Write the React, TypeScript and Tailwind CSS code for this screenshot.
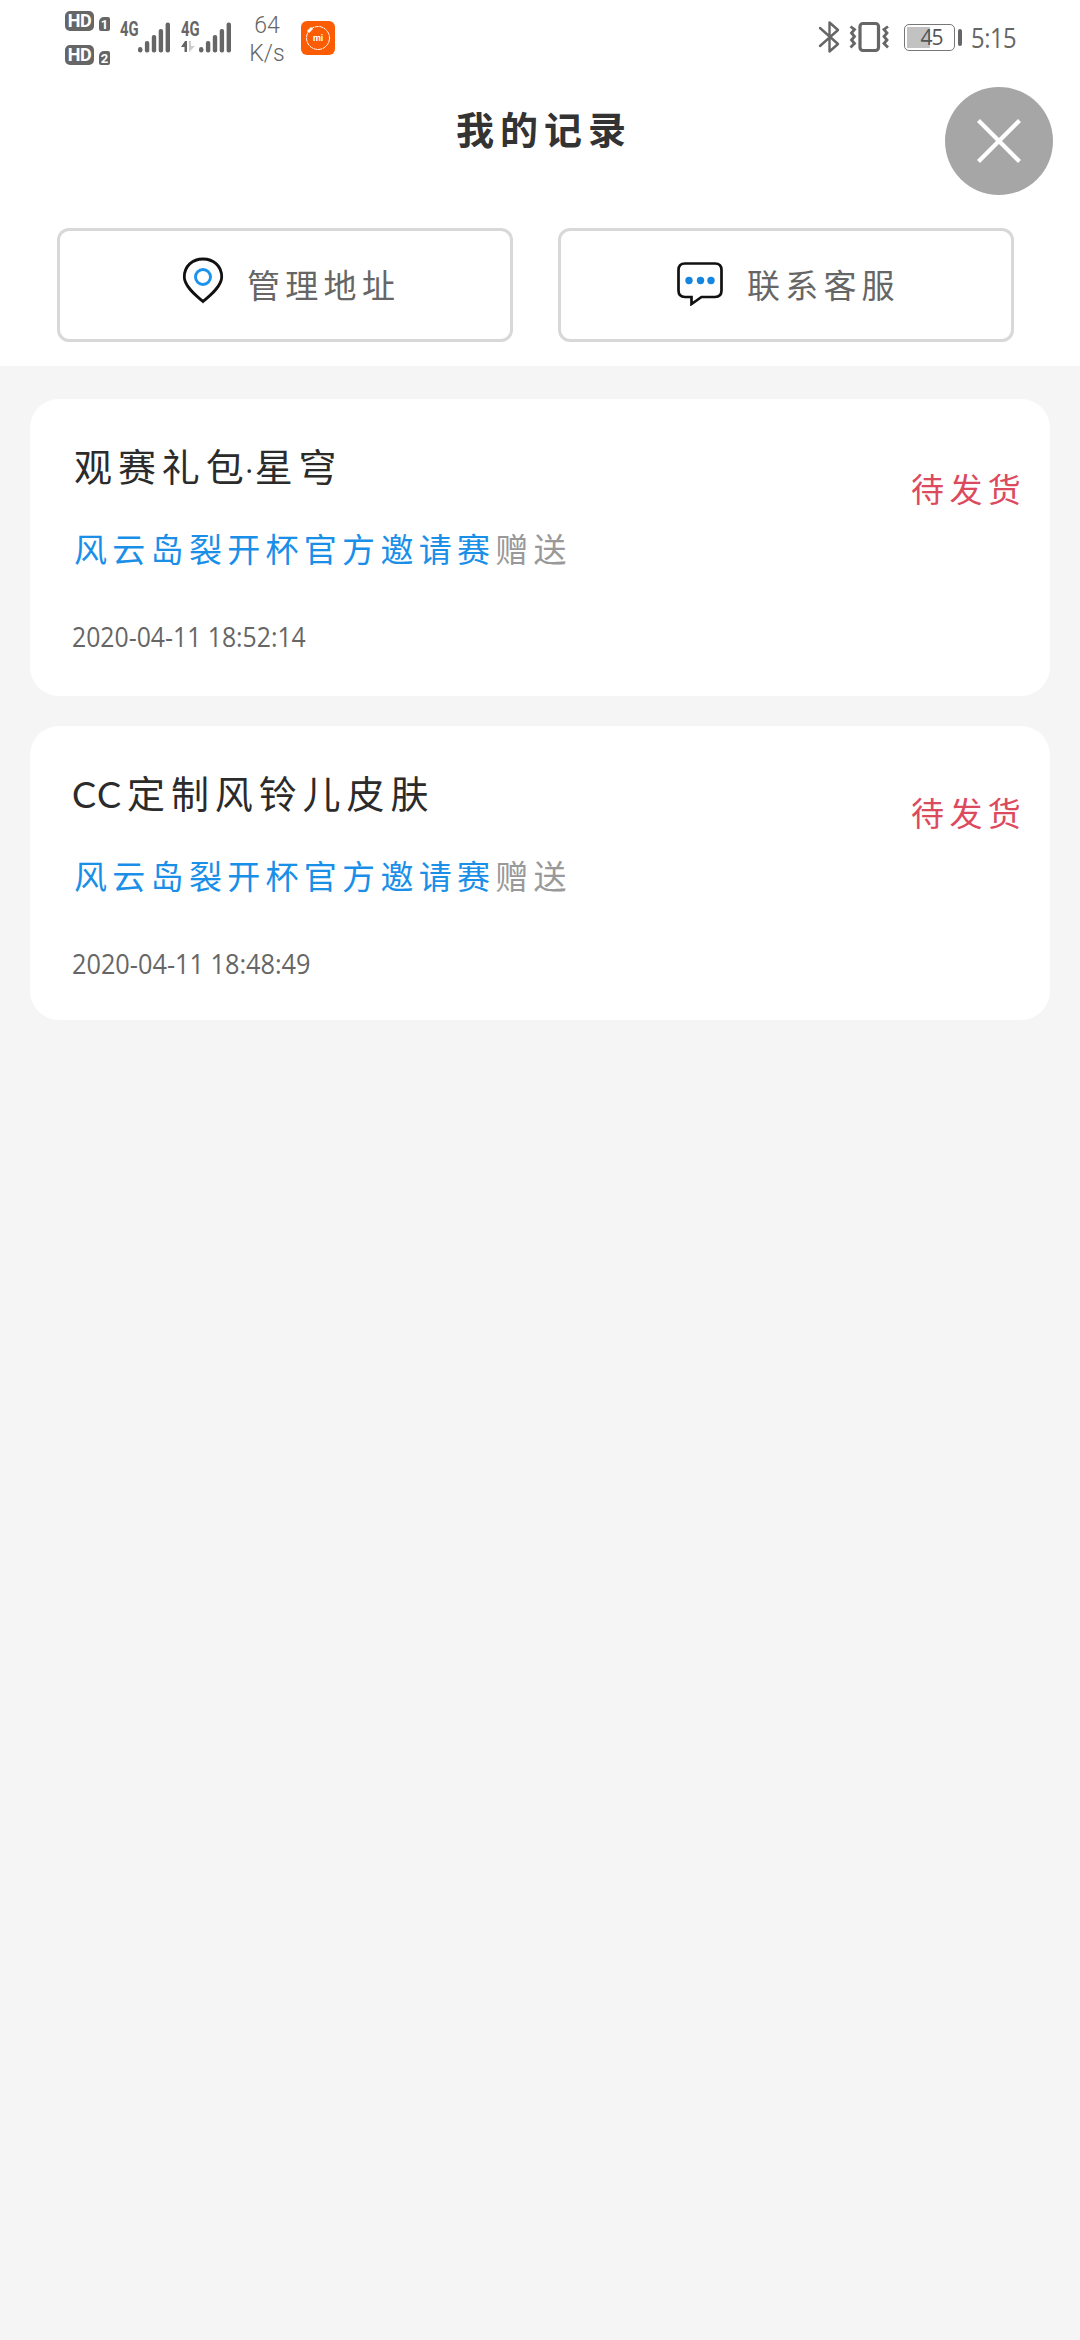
import clsx from 'clsx';

interface RecordItem {
  id: number;
  title: React.ReactNode;
  source: string;
  time: string;
  timeClass: string;
  status: string;
  className: string;
  statusClass: string;
}

const records: RecordItem[] = [
  {
    id: 1,
    title: (
      <>
        观赛礼<span className="tracking-normal">包</span>
        <span className="inline-block w-[11px] text-center font-['Open_Sans'] text-[30px] leading-none tracking-normal">·</span>
        星穹
      </>
    ),
    source: '风云岛裂开杯官方邀请赛',
    time: '2020-04-11 18:52:14',
    timeClass: 'scale-x-[0.885]',
    status: '待发货',
    className: 'h-[297px]',
    statusClass: 'pt-[72px]',
  },
  {
    id: 2,
    title: (
      <>
        <span className="-ml-[2px] inline-block w-[55px] font-['Lato'] text-[36px] leading-none tracking-[1.5px]">CC</span>
        定制风铃儿皮肤
      </>
    ),
    source: '风云岛裂开杯官方邀请赛',
    time: '2020-04-11 18:48:49',
    timeClass: 'scale-x-[0.903]',
    status: '待发货',
    className: 'h-[294px]',
    statusClass: 'pt-[69px]',
  },
];

function HdBadge({ sim }: { sim: string }) {
  return (
    <div className="flex h-[20px] items-end gap-[5px]">
      <div className="flex h-[20px] w-[29px] items-center justify-center self-start rounded-[5px] bg-[#666] font-['Roboto'] text-[18px] leading-none font-bold tracking-[-0.5px] text-white">
        HD
      </div>
      <div className="flex h-[14px] w-[11px] items-center justify-center rounded-[2px] rounded-tl-[5px] bg-[#666] font-['Roboto'] text-[13px] leading-none font-bold text-white">
        {sim}
      </div>
    </div>
  );
}

function Signal({ arrows = false }: { arrows?: boolean }) {
  return (
    <div className="flex h-[31px] w-[50px] justify-between">
      <div className="flex flex-col">
        <span className="h-[19px] w-[18px] origin-left scale-x-[0.74] font-['Roboto'] text-[20px] leading-[15px] font-bold text-[#666]">
          4G
        </span>
        {arrows && (
          <svg className="h-[12px] w-[14px]" viewBox="0 0 14 12">
            <path d="M0 6 L4 0 H6 V11 H3.5 V6 Z" fill="#666" />
            <path d="M8 0 V11 L14 5 H10 V0 Z" fill="#ccc" />
          </svg>
        )}
      </div>
      <svg className="-ml-[2px] h-[31px] w-[32px] shrink-0" viewBox="0 0 32 31" fill="#666">
        <rect x="0" y="25" width="4.4" height="5.5" rx="2.2" />
        <rect x="6.9" y="19" width="4.4" height="11.5" rx="2" />
        <rect x="13.8" y="13" width="4.4" height="17.5" rx="2" />
        <rect x="20.7" y="7" width="4.4" height="23.5" rx="2" />
        <rect x="27.6" y="0.5" width="4.4" height="30" rx="2" />
      </svg>
    </div>
  );
}

function StatusBar() {
  return (
    <div className="flex h-[76px] items-start justify-between pr-[64px] pl-[65px] text-[#666]">
      <div className="flex">
        <div className="flex flex-col gap-[14px] pt-[11px]">
          <HdBadge sim="1" />
          <HdBadge sim="2" />
        </div>
        <div className="mt-[22px] ml-[10px] flex gap-[11px]">
          <Signal />
          <Signal arrows />
        </div>
        <div className="mt-[12px] ml-[15px] flex w-[42px] flex-col items-center font-['Roboto'] text-[23px] leading-[27.5px] font-light">
          <span>64</span>
          <span>K/s</span>
        </div>
        <svg className="mt-[21px] ml-[13px] h-[34px] w-[34px]" viewBox="0 0 34 34">
          <rect width="34" height="34" rx="6" fill="#fb5c04" />
          <circle cx="17" cy="17" r="11.5" fill="none" stroke="#fff" strokeWidth="1" strokeDasharray="4 0.6" />
          <path d="M7 11 L11 7" stroke="#fff" strokeWidth="3" />
          <text x="17" y="20" textAnchor="middle" fill="#fff" fontSize="9" className="font-['Roboto'] font-bold">
            mi
          </text>
        </svg>
      </div>

      <div className="flex">
        <svg className="mt-[20px] h-[34px] w-[22px]" viewBox="0 0 22 34" fill="none" stroke="#666" strokeWidth="2.4" strokeLinejoin="round" strokeLinecap="round">
          <path d="M2 8 L20 24 L11.5 31.5 V2.5 L20 10 L2 26" />
        </svg>
        <svg className="mt-[21px] ml-[9px] h-[32px] w-[41px]" viewBox="0 0 41 32" fill="none" stroke="#666">
          <rect x="11" y="2.5" width="18.5" height="27" rx="3" strokeWidth="3.2" />
          <path d="M1.5 5.5 L5.5 8.5 L2.5 12 L5.5 15.5 L2.5 19 L5.5 22.5 L1.5 26.5" strokeWidth="2.8" />
          <path d="M39 5.5 L35 8.5 L38 12 L35 15.5 L38 19 L35 22.5 L39 26.5" strokeWidth="2.8" />
        </svg>
        <div className="mt-[24px] ml-[14px] flex h-[27px] items-center gap-[3px]">
          <div className="relative h-[27px] w-[51px] rounded-[5px] border-[1.5px] border-[#777] p-[2px]">
            <div className="h-full w-[23px] bg-[#c2c2c2]" />
            <span className="absolute inset-0 flex items-center justify-center pl-[4px] font-['Open_Sans'] text-[21px] tracking-[-1px] text-[#555]">
              45
            </span>
          </div>
          <div className="h-[17px] w-[4px] rounded-[2px] bg-[#666]" />
        </div>
        <span className="mt-[22px] ml-[9px] w-[45px] origin-left scale-x-[0.88] font-['Open_Sans'] text-[27px] leading-[32px] tracking-[-0.5px] whitespace-nowrap">
          5:15
        </span>
      </div>
    </div>
  );
}

function PinIcon() {
  return (
    <svg className="h-[47px] w-[42px]" viewBox="0 0 42 47" fill="none">
      <path
        d="M21 44.5 C16 40 2.3 30 2.3 20 C2.3 9 10.5 2 21 2 C31.5 2 39.7 9 39.7 20 C39.7 30 26 40 21 44.5 Z"
        stroke="#111"
        strokeWidth="2.8"
      />
      <circle cx="21" cy="20" r="7.5" stroke="#1b93ee" strokeWidth="2.9" />
    </svg>
  );
}

function ChatIcon() {
  return (
    <svg className="h-[44px] w-[46px]" viewBox="0 0 46 44" fill="none">
      <path
        d="M8 1.5 H38 Q44.5 1.5 44.5 8 V28.5 Q44.5 35 38 35 H24.5 L14.5 42 V35 H8 Q1.5 35 1.5 28.5 V8 Q1.5 1.5 8 1.5 Z"
        stroke="#111"
        strokeWidth="2.7"
      />
      <circle cx="12" cy="18.5" r="3.7" fill="#1486e0" />
      <circle cx="23.5" cy="18.5" r="3.7" fill="#1486e0" />
      <circle cx="34" cy="18.5" r="3.7" fill="#1486e0" />
    </svg>
  );
}

function RecordCard({ record }: { record: RecordItem }) {
  return (
    <div className={clsx('flex justify-between rounded-[29px] bg-white pr-[24px] pl-[44px]', record.className)}>
      <div className="pt-[44px]">
        <h2 className="h-[50px] text-[38px] leading-[50px] tracking-[5.9px] whitespace-nowrap text-[#2b2b2b]">
          {record.title}
        </h2>
        <p className="mt-[38px] h-[40px] text-[33px] leading-[40px] tracking-[5.3px] whitespace-nowrap text-[#999]">
          <span className="text-[#1a8fe8]">{record.source}</span>赠送
        </p>
        <p
          className={clsx(
            "mt-[45px] -ml-[2px] origin-left font-['Open_Sans'] text-[28px] leading-[40px] whitespace-nowrap text-[#666]",
            record.timeClass
          )}
        >
          {record.time}
        </p>
      </div>
      <div
        className={clsx(
          'text-[33px] leading-[40px] tracking-[5.3px] whitespace-nowrap text-[#dc4a5e]',
          record.statusClass
        )}
      >
        {record.status}
      </div>
    </div>
  );
}

export default function App() {
  return (
    <div className="flex min-h-[2340px] w-[1080px] flex-col bg-[#f5f5f5] font-['Liberation_Sans','Noto_Sans_CJK_SC',sans-serif]">
      <header className="relative h-[366px] bg-white">
        <StatusBar />
        <h1 className="h-[78px] pt-[30px] pl-[456px] text-[38px] leading-[50px] font-bold tracking-[6px] text-[#333]">我的记录</h1>
        <button className="absolute top-[87px] left-[945px] flex h-[108px] w-[108px] items-center justify-center rounded-full bg-[#a6a6a6]">
          <svg className="h-[46px] w-[46px]" viewBox="0 0 46 46" stroke="#fff" strokeWidth="4.2">
            <path d="M2.5 2.5 L43.5 43.5 M43.5 2.5 L2.5 43.5" />
          </svg>
        </button>

        <div className="mt-[74px] flex gap-[45px] pl-[57px]">
          <button className="flex h-[114px] w-[456px] items-start rounded-[12px] border-[3px] border-[#d8d8d8] pl-[122px] text-[33px] tracking-[5.3px] text-[#666]">
            <span className="mt-[26px]">
              <PinIcon />
            </span>
            <span className="mt-[36px] ml-[23px] leading-[40px]">管理地址</span>
          </button>
          <button className="flex h-[114px] w-[456px] items-start rounded-[12px] border-[3px] border-[#d8d8d8] pl-[116px] text-[33px] tracking-[5.2px] text-[#666]">
            <span className="mt-[31px]">
              <ChatIcon />
            </span>
            <span className="mt-[36px] ml-[24px] leading-[40px]">联系客服</span>
          </button>
        </div>
      </header>

      <main className="flex flex-col gap-[30px] pt-[33px] pr-[30px] pl-[30px]">
        {records.map((record) => (
          <RecordCard key={record.id} record={record} />
        ))}
      </main>
    </div>
  );
}
